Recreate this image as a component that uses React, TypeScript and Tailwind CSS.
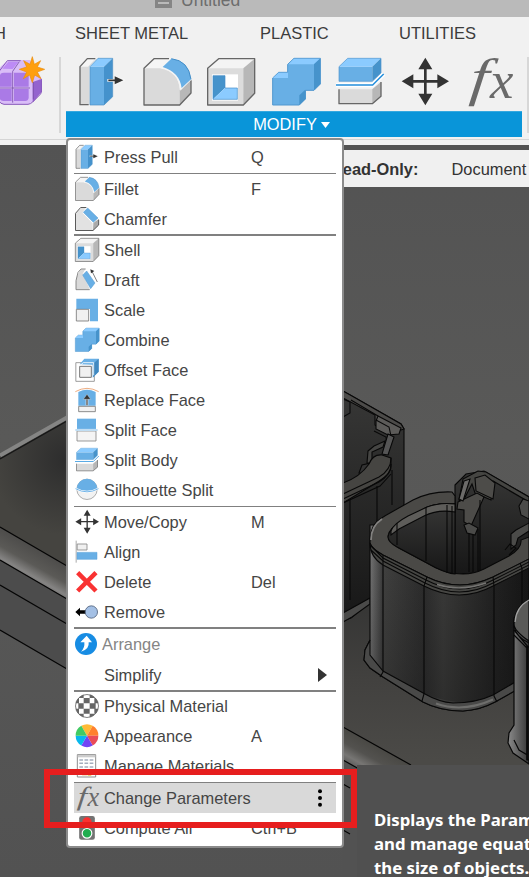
import React from "react";

type IconProps = { className?: string };
type Kids = { className?: string; children: React.ReactNode };

const Svg = ({ className = "size-6", children }: Kids) => (
  <svg viewBox="0 0 144 144" className={`${className} shrink-0 overflow-visible`} fill="none" strokeLinejoin="round">
    {children}
  </svg>
);

const PressPull = ({ className }: IconProps) => (
  <Svg className={className}>
    <path d="M6 26 28 2H54L34 26V140H6Z" fill="#dadada" />
    <path d="M6 26 28 2H52L30 26Z" fill="#f5f5f5" />
    <path d="M52 2H28L6 26V140H32" stroke="#666" strokeWidth="4" />
    <path d="M36 26H78V141H36Z" fill="#68afe5" />
    <path d="M36 26 60 1H104L78 26Z" fill="#8bcbff" />
    <path d="M78 26 104 1V116L78 141Z" fill="#4592cc" />
    <path d="M36 26 60 1H104V116L78 141H36Z" stroke="#4b8fc4" strokeWidth="2" />
    <path d="M88 67H112V57L138 67 112 78V67" stroke="#f5f5f5" strokeWidth="8" />
    <path d="M91 67H116" stroke="#333" strokeWidth="5" />
    <path d="M110 55 136 67 110 79Z" fill="#333" />
  </Svg>
);

const Fillet = ({ className }: IconProps) => (
  <Svg className={className}>
    <path d="M3 31 33 2H80L54 31Z" fill="#f5f5f5" />
    <path d="M3 31H53Q107 38 110 96V141H3Z" fill="#dadada" />
    <path d="M110 96 144 66V105L110 141Z" fill="#b8b8b8" />
    <path d="M78 2H33L3 31V141H110L144 105V67" stroke="#666" strokeWidth="4" />
    <path d="M52 31 83 0Q140 8 145 65L112 98Q107 42 52 31Z" fill="#f5f5f5" />
    <path d="M59 27 85 2Q137 8 144 64L116 90Q109 42 59 27Z" fill="#68afe5" />
    <path d="M85 2Q137 8 144 64" stroke="#438dc7" strokeWidth="3" />
  </Svg>
);

const Chamfer = () => (
  <Svg>
    <path d="M3 40 40 3H66L44 34 106 98V141H3Z" fill="#e2e2e2" />
    <path d="M110 96 142 72V110L108 141Z" fill="#aaa" />
    <path d="M68 3H34L3 38V141H108L142 108V76" stroke="#5a5a5a" strokeWidth="6" />
    <path d="M50 32 76 6 138 66 110 92Z" fill="#68afe5" stroke="#5398cf" strokeWidth="3" />
  </Svg>
);

const Shell = ({ className }: IconProps) => (
  <Svg className={className}>
    <path d="M2 31 35 2H143L109 31Z" fill="#f4f4f4" />
    <path d="M2 31H109V141H2Z" fill="#dcdcdc" />
    <path d="M109 31 143 2V106L109 141Z" fill="#b7b7b7" />
    <path d="M2 31 35 2H143V106L109 141H2Z" stroke="#666" strokeWidth="4" />
    <path d="M15 49H93V128H15Z" fill="#fff" />
    <path d="M18 53H54V90L18 124Z" fill="#4693cb" />
    <path d="M54 90H91V124H18Z" fill="#8bcbff" />
    <path d="M54 90H91V124H18V53H54Z" stroke="#438dc7" strokeWidth="2" />
  </Svg>
);

const Draft = () => (
  <Svg>
    <path d="M6 62 34 8H62L46 34 90 130H6Z" fill="#dadada" />
    <path d="M64 6H36L18 26 6 76V130H88" stroke="#777" strokeWidth="5" />
    <path d="M46 42 70 18 120 90 94 124Z" fill="#68afe5" stroke="#5398cf" strokeWidth="3" />
    <path d="M100 16 134 84" stroke="#666" strokeWidth="5" />
    <path d="M92 8 116 18 96 32Z" fill="#333" />
  </Svg>
);

const Scale = () => (
  <Svg>
    <path d="M8 4H138V140H90V66H8Z" fill="#68afe5" />
    <path d="M8 68H82V138H8Z" fill="#f0f0f0" stroke="#777" strokeWidth="5" />
  </Svg>
);

const Combine = ({ className }: IconProps) => (
  <Svg className={className}>
    <path d="M2 60 20 43H47V19L66 1H145V78L126 97H100V123L82 141H2Z" fill="#68afe5" stroke="#5197cf" strokeWidth="3" />
    <path d="M49 19 66 2H144L126 19Z" fill="#8bcbff" />
    <path d="M3 60 20 44H48V60Z" fill="#8bcbff" />
    <path d="M126 19 145 1V78L126 97Z" fill="#4693cb" />
    <path d="M82 112 98 97H101V123L82 141Z" fill="#4693cb" />
  </Svg>
);

const OffsetFace = () => (
  <Svg>
    <path d="M5 28H116V140H5Z" fill="#fff" stroke="#8a8a8a" strokeWidth="5" />
    <path d="M28 38 56 4H142V82L106 118V40Z" fill="#68afe5" />
    <path d="M116 28 142 4V82L108 116V40Z" fill="#4189c0" />
    <path d="M28 50H98V116H28Z" fill="#f0f0f0" stroke="#777" strokeWidth="6" />
    <path d="M32 43 50 28H112V104" stroke="#fff" strokeWidth="5" />
  </Svg>
);

const ReplaceFace = () => (
  <Svg>
    <path d="M20 24Q72 -4 124 24V106H20Z" fill="#68afe5" />
    <path d="M2 22Q72 -18 142 22" stroke="#e99b68" strokeWidth="5" />
    <path d="M22 110H122V142H22Z" fill="#f1f1f1" stroke="#777" strokeWidth="5" />
    <path d="M72 104V54" stroke="#fff" strokeWidth="15" />
    <path d="M72 104V56" stroke="#333" strokeWidth="7" />
    <path d="M50 68 72 38 94 68Z" fill="#333" stroke="#fff" strokeWidth="2" />
  </Svg>
);

const SplitFace = () => (
  <Svg>
    <path d="M12 4H126V66H12Z" fill="#68afe5" />
    <path d="M12 78H126V138H12Z" fill="#f4f4f4" stroke="#888" strokeWidth="5" />
    <path d="M2 72H136" stroke="#fff" strokeWidth="13" />
    <path d="M2 72H136" stroke="#68afe5" strokeWidth="5" />
  </Svg>
);

const SplitBody = ({ className }: IconProps) => (
  <Svg className={className}>
    <path d="M9 94H109L135 72V115L109 137H9Z" fill="#dadada" />
    <path d="M109 94 135 72V115L109 137Z" fill="#b7b7b7" />
    <path d="M9 94V137H109L135 115V72" stroke="#666" strokeWidth="4" />
    <path d="M9 26H109V70H9Z" fill="#68afe5" />
    <path d="M9 26 35 1H135L109 26Z" fill="#8bcbff" />
    <path d="M109 26 135 1V45L109 70Z" fill="#4693cb" />
    <path d="M9 26 35 1H135V45L109 70H9Z" stroke="#4d94ce" strokeWidth="2" />
    <path d="M0 81H110L143 48" stroke="#fff" strokeWidth="13" />
    <path d="M0 81H110L143 48" stroke="#248fdc" strokeWidth="4.5" />
  </Svg>
);

const Silhouette = () => (
  <Svg>
    <circle cx="72" cy="68" r="61" fill="#f2f2f2" stroke="#888" strokeWidth="4" />
    <path d="M10 66A62 62 0 0 1 134 66Q72 94 10 66Z" fill="#68afe5" />
    <path d="M3 64Q72 102 141 64" stroke="#fff" strokeWidth="13" />
    <path d="M3 64Q72 102 141 64" stroke="#55a5e3" strokeWidth="5" />
  </Svg>
);

const Move = ({ className }: IconProps) => (
  <Svg className={className}>
    <path d="M73 22V118M22 70H124" stroke="#333" strokeWidth="8" />
    <path d="M73-1 94 34H52ZM73 142 94 107H52ZM2 70 37 49V91ZM144 70 109 49V91Z" fill="#333" />
  </Svg>
);

const Fx = ({ className }: IconProps) => (
  <Svg className={className}>
    <g fill="#6a6a6a" fontFamily="Liberation Serif, serif" fontStyle="italic" fontSize="158">
      <text transform="translate(12 111) skewX(-6) scale(1.25 1)">f</text>
      <text x="75" y="120">x</text>
    </g>
  </Svg>
);

const Align = () => (
  <Svg>
    <path d="M7 4V136" stroke="#999" strokeWidth="5" />
    <path d="M13 24H72V60H13Z" fill="#f0f0f0" stroke="#888" strokeWidth="5" />
    <path d="M12 74H132V116H12Z" fill="#68afe5" stroke="#5ba2d9" strokeWidth="3" />
  </Svg>
);

const Delete = () => (
  <Svg>
    <path d="M16 16 126 126M126 16 16 126" stroke="#f93232" strokeWidth="27" />
  </Svg>
);

const Remove = () => (
  <Svg>
    <path d="M2 72 30 46V62H66V82H30V98Z" fill="#000" />
    <circle cx="98" cy="72" r="37" fill="#a4c0e5" stroke="#4d5f79" strokeWidth="5" />
  </Svg>
);

const Arrange = () => (
  <Svg>
    <circle cx="66" cy="72" r="66" fill="#178ce3" />
    <path d="M36 118Q60 96 56 62H32L70 22 102 62H82Q88 104 36 118Z" fill="#fff" />
  </Svg>
);

const Physical = () => (
  <Svg>
    <defs><clipPath id="ball"><circle cx="72" cy="72" r="70" /></clipPath></defs>
    <circle cx="72" cy="72" r="69" fill="#fff" />
    <g clipPath="url(#ball)" fill="#666">
      <path d="M24 0H52V24H24ZM88 0H116V24H88ZM0 24H24V56H0ZM52 24H88V56H52ZM116 24H144V56H116ZM20 56H52V88H20ZM88 56H124V88H88ZM0 88H24V118H0ZM52 88H88V118H52ZM116 88H144V118H116ZM24 118H52V144H24ZM88 118H116V144H88Z" />
    </g>
    <circle cx="72" cy="72" r="69" stroke="#666" strokeWidth="5" />
  </Svg>
);

const Appearance = () => (
  <Svg>
    <path d="M72 70 38 11A68 68 0 0 1 106 11Z" fill="#ffba36" />
    <path d="M72 70 106 11A68 68 0 0 1 140 70Z" fill="#ff802d" />
    <path d="M72 70H140A68 68 0 0 1 106 129Z" fill="#e94c58" />
    <path d="M72 70 106 129A68 68 0 0 1 38 129Z" fill="#7144f4" />
    <path d="M72 70 38 129A68 68 0 0 1 4 70Z" fill="#08b8ed" />
    <path d="M72 70H4A68 68 0 0 1 38 11Z" fill="#42cb63" />
  </Svg>
);

const Manage = () => (
  <Svg>
    <path d="M14 4H124V138H14Z" fill="#fff" stroke="#777" strokeWidth="5" />
    <path d="M16 6H122V20H16Z" fill="#ccc" />
    <path d="M26 36H112M26 56H112M26 78H112M26 98H112" stroke="#a5aebe" strokeWidth="9" strokeDasharray="22 9" />
    <path d="M42 128 58 106 72 128Z" fill="#e98b27" />
    <path d="M76 112H98V130H76Z" fill="#e8bf31" />
  </Svg>
);

const Compute = () => (
  <Svg>
    <rect x="25" y="0" width="94" height="143" rx="14" fill="#737373" />
    <circle cx="72" cy="36" r="28" fill="#fa3030" />
    <circle cx="72" cy="104" r="29" fill="#20ad4f" stroke="#fff" strokeWidth="7" />
  </Svg>
);

const Form = () => (
  <svg viewBox="0 0 135 150" className="h-[50px] w-[45px] shrink-0" fill="none">
    <path d="M-8 54Q-8 40 8 26L22 16Q30 12 50 12H90L125 68V106Q124 113 112 122L99 136Q90 145 80 145H10Q-8 143-8 120Z" fill="#d9bdf7" />
    <path d="M98 78 126 68V106L98 140Z" fill="#9463ce" />
    <path d="M2 53Q5 50 12 50H35V92H-2V62ZM42 50H78Q86 50 86 60V92H42ZM-2 99H35V135H10Q-2 134-2 122ZM42 99H86V126Q84 135 76 135H42Z" fill="#aa7ae6" />
    <path d="M7 38 25 17H56L38 39Z" fill="#bd8bf5" />
    <path d="M-2 96H90M38 140V46L58 17M100 130V78" stroke="#7950a8" strokeWidth="2.5" />
    <path d="M-8 53 22 14H62M-4 134Q2 144 12 145H84Q92 144 98 138L120 116Q124 112 124 106V73" stroke="#8959bb" strokeWidth="3" />
    <path d="M97 2 103 25 122 14 112 33 134 40 112 48 123 68 104 57 97 80 89 57 70 68 80 48 58 40 80 33 71 14 90 25Z" fill="#ff9f0e" stroke="#eb8c0b" strokeWidth="2" />
  </svg>
);

const MenuRow = ({ icon, label, hotkey, muted, tall, active, submenu }: {
  icon?: React.ReactNode; label: string; hotkey?: string; muted?: boolean; tall?: boolean; active?: boolean; submenu?: boolean;
}) => (
  <div className={`flex shrink-0 items-center pl-px ${tall ? "h-[31px] pb-px" : "h-[30px]"} ${active ? "bg-[#d9d9d9]" : ""} ${muted ? "text-[#858585]" : "text-[#454545]"}`}>
    <span className="flex w-[29px] shrink-0">{icon}</span>
    <span className={`w-[147px] whitespace-nowrap ${muted ? "-ml-0.5 mr-0.5" : ""}`}>{label}</span>
    <span className="grow">{hotkey}</span>
    {submenu && <svg viewBox="0 0 9 14" className="mr-[9px] h-[14px] w-[9px]"><path d="M0 0 9 7 0 14Z" fill="#333" /></svg>}
    {active && <svg viewBox="0 0 4 18" className="mr-[14px] h-[18px] w-1"><circle cx="2" cy="2.2" r="2"/><circle cx="2" cy="9" r="2"/><circle cx="2" cy="15.8" r="2"/></svg>}
  </div>
);

const Rule = ({ thin }: { thin?: boolean }) => <div className={`shrink-0 bg-[#808080] ${thin ? "h-px" : "h-0.5"}`} />;

const Model = () => (
  <svg viewBox="0 145 529 732" className="absolute inset-0 h-full w-full" fill="none">
    <defs>
      <linearGradient id="air" x1="0" y1="0" x2="0" y2="1"><stop stopColor="#535353" /><stop offset=".4" stopColor="#595958" /><stop offset="1" stopColor="#525252" /></linearGradient>
      <linearGradient id="body" x1="370" x2="529" y1="0" y2="0" gradientUnits="userSpaceOnUse"><stop stopColor="#747474" /><stop offset=".08" stopColor="#3b3b3b" /><stop offset=".09" stopColor="#414140" /><stop offset=".34" stopColor="#2d2d2d" /><stop offset=".46" stopColor="#3b3b3a" /><stop offset=".57" stopColor="#323231" /><stop offset=".75" stopColor="#242424" /><stop offset="1" stopColor="#151515" /></linearGradient>
      <linearGradient id="dark" x1="0" y1="0" x2="0" y2="1"><stop stopColor="#373736" /><stop offset="1" stopColor="#171717" /></linearGradient>
      <linearGradient id="shade" x1="0" y1="0" x2="0" y2="1"><stop stopColor="#101010" stopOpacity="0" /><stop offset="1" stopColor="#101010" stopOpacity=".3" /></linearGradient>
      <linearGradient id="post" x1="0" y1="0" x2="1" y2="0"><stop stopColor="#8a8a8a" /><stop offset="1" stopColor="#353535" /></linearGradient>
      <linearGradient id="floor" x1="0" y1="600" x2="0" y2="760" gradientUnits="userSpaceOnUse"><stop stopColor="#353534" /><stop offset=".5" stopColor="#42413f" /><stop offset="1" stopColor="#4b4a47" /></linearGradient>
      <radialGradient id="plate" cx="66" cy="460" r="75" gradientUnits="userSpaceOnUse"><stop stopColor="#2d2d2d" /><stop offset="1" stopColor="#454440" /></radialGradient>
      <linearGradient id="bevel" x1="0" y1="530" x2="-17" y2="560" gradientUnits="userSpaceOnUse"><stop stopColor="#4f4e4c" /><stop offset=".4" stopColor="#5b5a57" /><stop offset=".7" stopColor="#858483" /><stop offset="1" stopColor="#535353" /></linearGradient>
      <linearGradient id="bevelR" x1="343" y1="727" x2="327" y2="756" gradientUnits="userSpaceOnUse"><stop stopColor="#494844" /><stop offset=".4" stopColor="#53524f" /><stop offset=".7" stopColor="#777674" /><stop offset="1" stopColor="#505050" /></linearGradient>
    </defs>
    <path d="M0 145H529V877H0Z" fill="url(#air)" />

    <path d="M0 455 67 417V566L0 527Z" fill="url(#plate)" />
    <path d="M0 455.5 67 417.5" stroke="#858584" strokeWidth="4" />
    <path d="M0 459 67 421" stroke="#151515" strokeWidth="1.2" />
    <path d="M0 527 67 566V599L0 560Z" fill="url(#bevel)" />
    <path d="M0 560 67 599V669L0 630Z" fill="#4c4c4c" />
    <path d="M0 527 67 566M0 560 67 599M0 585 67 624M0 630 67 669" stroke="#050505" strokeWidth="1.2" />

    <path d="M343 580H529V765H343Z" fill="url(#floor)" />
    <path d="M343 727 411 765H357V768L343 760Z" fill="url(#bevelR)" />
    <path d="M343 760 359 769V877H343Z" fill="#525252" />
    <path d="M343 727 411 765M343 760 359 769M343 784 350 788M343 830 350 834" stroke="#050505" strokeWidth="1.2" />

    <g stroke="#080808" strokeWidth="1.1">
      <path d="M343 391 401 424 404 429V600L370 602 351 618 343 620Z" fill="url(#dark)" />
      <path d="M343 391 352 396 401 424 404 429 389 434 375 425V415L343 398Z" fill="#4c4b49" />
      <path d="M343 399 350 402V413L343 417M351 400 378 416" />
      <path d="M378 416 401 428 399 434 388 435 376 429V421Z" fill="#5c5b59" />
      <path d="M374 431 386 437 388 455M376 420 389 427 391 436" />
      <path d="M388 434 394 437 388 455 382 454Z" fill="#555" />
      <path d="M368 451 374 446 385 441 383 447 372 452V463H367Z" fill="#454543" />
      <path d="M359 473 362 465 371 463V474Z" fill="#333" />
      <path d="M343 483Q360 477 369 464 373 454 382 455L391 458V467Q391 474 376 483L343 503Z" fill="#464542" />
      <path d="M343 494 379 477Q391 470 391 458M343 499 379 482Q391 475 391 464M343 503 380 486 391 474" />
      <path d="M350 500V600M377 486V595M392 470V505" />
      <path d="M343 613 370 598V604L352 617 343 622Z" fill="#4a4a49" />
    </g>

    <g stroke="#080808" strokeWidth="1.1">
      <path d="M370 525V640L365 650 364 660 370 668 383 677 423 702Q440 711 463 711 480 710 495 702L529 683V525Z" fill="url(#body)" />
      <path d="M370 550V660L383 671 425 694Q452 705 480 702L529 678V550Z" fill="url(#shade)" stroke="none" />
      <path d="M370 640 365 650 364 660 370 668 383 677 423 702Q440 711 463 711 480 710 495 702L529 683V674L493 695Q476 703 453 703 439 702 425 694L383 671 370 655Z" fill="#494948" />
      <path d="M436 703.5Q463 713 493 699.5" stroke="#6e6e6c" strokeWidth="2" />
      <path d="M455 485 466 474 484 471 529 497V555L480 573 455 574Z" fill="url(#dark)" />
      <path d="M463 479 478 471 486 472 529 497V502L493 481 491 500 475 493 472 484 462 503 459 500Z" fill="#454542" />
      <path d="M475 478 485 475 495 483 493 499 476 491ZM458 502 477 493 484 497 471 526 464 522V510L457 509Z" fill="#4d4c49" />
      <path d="M464 481 470 479 463 501 459 499Z" fill="#6c6b69" />
      <path d="M464 525 469 523 478 528 475 535 467 533ZM519 506 523 499 529 501V519L521 515ZM511 534 516 530 529 523V531L518 538 516 545 511 549Z" fill="#4b4b49" />
      <path d="M469 534V572M473 535V572M478 529V572M480 500V573M505 550 510 544 516 548 509 555" />

      <path fillRule="evenodd" d="M370 543C370 524 377 520 390 513L413 500Q431 491 452 492L455 496V504Q432 502 419 512L403 521Q389 528 388 536 388 541 399 548L427 563Q445 574 463 574 474 574 484 569L509 556Q522 548 521 540L529 537V559L493 577Q476 585 460 585 443 585 427 577L383 555Q370 548 370 543Z" fill="#4a4946" />
      <path d="M388 537Q389 528 403 521L419 512Q432 502 455 504V574Q444 573 427 563L397 547Q388 542 388 537Z" fill="url(#dark)" />
      <path d="M391 531Q393 524 408 516L427 507Q440 502 455 504V512Q438 509 424 516L399 529 391 535Z" fill="#5e5d5a" />
      <path d="M397 523V545M426 507V561M447 505V573M452 506V574" />
      <path d="M370 543Q372 549 383 555L427 577Q443 585 460 585 476 585 493 577L529 559V568L493 586Q460 604 424 586L383 565Q370 557 370 543Z" fill="#464643" />
      <path d="M371 546 383 558 426 580Q460 598 493 580L529 562M371 550 383 561 425 583Q460 601 493 583L529 565" />
      <path d="M437 584.5Q460 592 486 583" stroke="#757472" strokeWidth="1.4" />
      <path d="M371 540Q371 526 382 519" stroke="#838280" strokeWidth="1.8" />
      <path d="M383 555V672L380 677M427 577 424 586V694L422 701M493 577 494 586V696L497 702M520 563 522 568V680" />
    </g>

    <g stroke="#070707" strokeWidth="1.2">
      <path d="M514 618V725L509 733 508 743 513 753 529 764V613Z" fill="url(#post)" />
      <path d="M529 600Q515 606 514 624 514 631 529 641Z" fill="#5a5a58" />
      <path d="M514 626Q516 637 529 643M514 630 529 648M514 635 529 650M514 740 519 750 529 756M527 645V760" />
      <path d="M527 647H530V760H527Z" fill="#111" />
      <path d="M515 622Q516 607 529 600" stroke="#a1a1a0" strokeWidth="1.3" />
    </g>
  </svg>
);

const Toolbar = () => (
  <div className="flex h-[123px] shrink-0 flex-col bg-[#f1f1f1]">
    <div className="flex h-8 shrink-0 items-center whitespace-nowrap text-[16.5px] text-[#3c3c3c]">
      <span className="-ml-[6px] w-[81px]">H</span>
      <span className="w-[185px]">SHEET METAL</span>
      <span className="w-[139px]">PLASTIC</span>
      <span>UTILITIES</span>
    </div>
    <div className="flex h-[90px] shrink-0">
      <div className="flex h-full w-[59px] shrink-0 pt-[7px]"><Form /></div>
      <div className="mt-2 h-[76px] w-[2px] shrink-0 bg-[#d7d7d7]" />
      <div className="ml-[5px] flex w-[456px] shrink-0 flex-col">
        <div className="flex h-[62px] shrink-0 gap-[16.5px] pl-3 pt-[9px]">
          <PressPull className="size-12" /><Fillet className="size-12" /><Shell className="size-12" />
          <Combine className="size-12" /><SplitBody className="size-12" /><Move className="size-12" /><Fx className="size-12" />
        </div>
        <div className="flex h-[26px] items-center justify-center gap-1 border-t border-[#35a8df] bg-[#0995d9] pr-[5px] text-[16.4px] text-white">
          <span>MODIFY</span>
          <svg viewBox="0 0 9 6" className="h-[6px] w-[9px]"><path d="M0 0H9L4.5 6Z" fill="white" /></svg>
        </div>
      </div>
      <div className="ml-[5px] mt-2 h-[76px] w-[2px] bg-[#d7d7d7]" />
    </div>
    <div className="h-px bg-[#d5d5d5]" />
  </div>
);

const ModifyMenu = () => (
  <div className="absolute left-[66px] top-[138px] flex h-[710px] w-[278px] flex-col rounded-[4px] border-2 border-[#8b8b8b] bg-white pl-[6px] pr-[6px] pt-[2px] text-[16.4px] leading-none">
    <MenuRow icon={<PressPull />} label="Press Pull" hotkey="Q" />
    <div className="h-px shrink-0" />
    <Rule thin />
    <MenuRow icon={<Fillet />} label="Fillet" hotkey="F" />
    <MenuRow icon={<Chamfer />} label="Chamfer" />
    <Rule />
    <div className="-mt-px mb-px shrink-0">
      <MenuRow icon={<Shell />} label="Shell" />
      <MenuRow icon={<Draft />} label="Draft" />
      <MenuRow icon={<Scale />} label="Scale" />
      <MenuRow icon={<Combine />} label="Combine" />
      <MenuRow icon={<OffsetFace />} label="Offset Face" />
      <MenuRow icon={<ReplaceFace />} label="Replace Face" />
      <MenuRow icon={<SplitFace />} label="Split Face" />
      <MenuRow icon={<SplitBody />} label="Split Body" />
      <MenuRow icon={<Silhouette />} label="Silhouette Split" />
    </div>
    <Rule thin />
    <MenuRow icon={<Move />} label="Move/Copy" hotkey="M" />
    <MenuRow icon={<Align />} label="Align" />
    <MenuRow icon={<Delete />} label="Delete" hotkey="Del" />
    <MenuRow icon={<Remove />} label="Remove" />
    <Rule />
    <MenuRow icon={<Arrange />} label="Arrange" muted tall />
    <MenuRow label="Simplify" submenu />
    <Rule />
    <div className="-mt-px mb-px shrink-0">
      <MenuRow icon={<Physical />} label="Physical Material" />
      <MenuRow icon={<Appearance />} label="Appearance" hotkey="A" />
      <MenuRow icon={<Manage />} label="Manage Materials" />
    </div>
    <Rule thin />
    <MenuRow icon={<Fx />} label="Change Parameters" active />
    <MenuRow icon={<Compute />} label="Compute All" hotkey="Ctrl+B" />
  </div>
);

export default function App() {
  return (
    <div className="relative flex h-[877px] w-[529px] flex-col overflow-hidden bg-[#565656] font-['Liberation_Sans',Arial,sans-serif]">
      <header className="flex h-[17px] shrink-0 items-end overflow-hidden bg-[#bababa] pl-[154px] text-[#6d6d6d]">
        <svg viewBox="0 0 19 18" className="h-[18px] w-[19px] -translate-y-[8px]"><path d="M1 0H18V17H1Z" fill="#858585" /><path d="M4 4H15M4 8H15M4 12H15" stroke="#bababa" strokeWidth="2" /></svg>
        <span className="ml-[8px] -translate-y-[8px] text-[17.5px] leading-[18px]">Untitled</span>
      </header>
      <Toolbar />
      <div className="h-[5px] shrink-0 bg-[#f1f1f1]" />
      <main className="relative h-[732px] shrink-0 overflow-hidden">
        <Model />
        <div className="relative ml-[343px] flex h-[42px] items-center overflow-hidden whitespace-nowrap border-t-[5px] border-[#535353] bg-[#f0f0f0] pt-0.5 text-[16.4px] text-[#333]">
          <span className="-ml-[12px] w-[120.5px] font-bold">Read-Only:</span>
          <span>Document</span>
        </div>
      </main>
      <aside className="absolute left-[357px] top-[765px] h-[112px] w-[172px] overflow-hidden whitespace-nowrap bg-[#505050] pl-[17px] pt-[43px] font-['Noto_Sans',sans-serif] text-[16.8px] font-bold leading-[24px] text-white">
        <p>Displays the Parameters</p><p>and manage equations</p><p>the size of objects.</p>
      </aside>
      <ModifyMenu />
      <div className="absolute left-[44px] top-[769px] h-[59px] w-[313px] border-[6px] border-[#e61e1e]" />
    </div>
  );
}
